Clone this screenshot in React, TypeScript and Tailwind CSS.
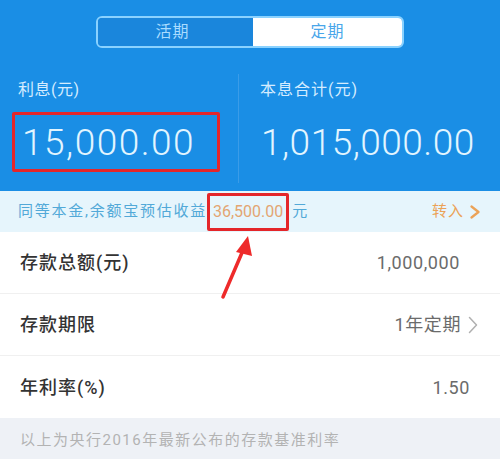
const rows = [
  { label: '存款总额(元)', value: '1,000,000', arrow: false, pad: 'pr-[40px]' },
  { label: '存款期限', value: '1年定期', arrow: true, pad: 'pr-[22px]' },
  { label: '年利率(%)', value: '1.50', arrow: false, pad: 'pr-[30px]' },
]

function Chevron({ className, w = 1.5, h = 18 }: { className: string; w?: number; h?: number }) {
  return (
    <svg className={className} width="10" height={h} viewBox={`0 0 10 ${h}`} fill="none">
      <path
        d={`M1.5 1.5 L8.5 ${h / 2} L1.5 ${h - 1.5}`}
        stroke="currentColor"
        strokeWidth={w}
        strokeLinecap="round"
        strokeLinejoin="round"
      />
    </svg>
  )
}

export default function App() {
  return (
    <div
      className="relative w-[500px] h-[459px] overflow-hidden bg-white"
      style={{ fontFamily: 'Roboto, "Noto Sans CJK SC", sans-serif' }}
    >
      {/* Header */}
      <div className="h-[191px] bg-[#1a8ee5] flex flex-col">
        <div className="pt-[16px] flex justify-center">
          <div className="w-[308px] h-[32px] rounded-[6px] border-[2px] border-[#8ad2ff] flex overflow-hidden">
            <div className="flex-1 flex items-center justify-center pr-[6px] bg-[#1a86dc] text-[16px] tracking-[1px] text-[#a9dcff]">
              活期
            </div>
            <div className="flex-1 flex items-center justify-center bg-white text-[16px] tracking-[1px] text-[#49a6ea]">
              定期
            </div>
          </div>
        </div>
        <div className="flex flex-1 mt-[26px] pb-[8px]">
          <div className="w-[238px] pl-[12px] pt-[6px]">
            <div className="pl-[6px] text-[16px] tracking-[0.5px] text-[#d5ecff] leading-[20px]">利息(元)</div>
            <div className="mt-[12px] w-[208px] h-[60px] border-[3px] border-[#e4262a] rounded-[2px] flex items-center pl-[7px]">
              <span className="text-[37px] font-light text-[#e2f5ff] leading-none tracking-[1.5px]">15,000.00</span>
            </div>
          </div>
          <div className="w-px bg-[#3a9ce8]" />
          <div className="flex-1 pl-[21px] pt-[6px]">
            <div className="text-[16px] tracking-[1px] text-[#d5ecff] leading-[20px]">本息合计(元)</div>
            <div className="mt-[12px] h-[60px] flex items-center pl-[1px]">
              <span className="text-[37px] font-light text-[#e2f5ff] leading-none tracking-[0.5px]">1,015,000.00</span>
            </div>
          </div>
        </div>
      </div>

      {/* Info bar */}
      <div className="h-[41px] bg-[#e6f5fc] flex items-center pl-[18px] pr-[20px] text-[15px]">
        <span className="text-[#52a9d8] tracking-[1.75px]">同等本金,余额宝预估收益</span>
        <span className="h-[38px] border-[3px] border-[#e4262a] rounded-[2px] flex items-center px-[3px] text-[16px] text-[#e3a572]">
          36,500.00
        </span>
        <span className="ml-[3px] text-[#52a9d8]">元</span>
        <span className="ml-auto flex items-center tracking-[1px] text-[#eba257]">
          转入
          <Chevron className="ml-[6px]" w={2.25} h={14} />
        </span>
      </div>

      {/* Rows */}
      <div className="flex flex-col">
        {rows.map((r, i) => (
          <div
            key={r.label}
            className={`h-[62px] pl-[20px] flex items-center ${r.pad} ${i < 2 ? 'border-b border-[#f0f0f0]' : ''}`}
          >
            <span className="text-[18px] tracking-[1px] font-medium text-[#333333]">{r.label}</span>
            <span className="ml-auto flex items-center text-[18px] tracking-[0.6px] text-[#6b6b6b]">
              {r.value}
              {r.arrow && <Chevron className="ml-[7px] text-[#b0b0b0]" />}
            </span>
          </div>
        ))}
      </div>

      {/* Footer */}
      <div className="h-[45px] bg-[#eef1f6] flex items-center pl-[20px] text-[15px] tracking-[1.5px] text-[#b3b3b3]">
        以上为央行2016年最新公布的存款基准利率
      </div>

      {/* Red arrow annotation */}
      <svg className="absolute left-[210px] top-[230px]" width="50" height="75" viewBox="0 0 50 75">
        <path d="M13 67 L34 18" stroke="#ee2a2a" strokeWidth="3.5" strokeLinecap="round" />
        <path d="M38 6 L26 22 L42 26 Z" fill="#ee2a2a" />
      </svg>
    </div>
  )
}
